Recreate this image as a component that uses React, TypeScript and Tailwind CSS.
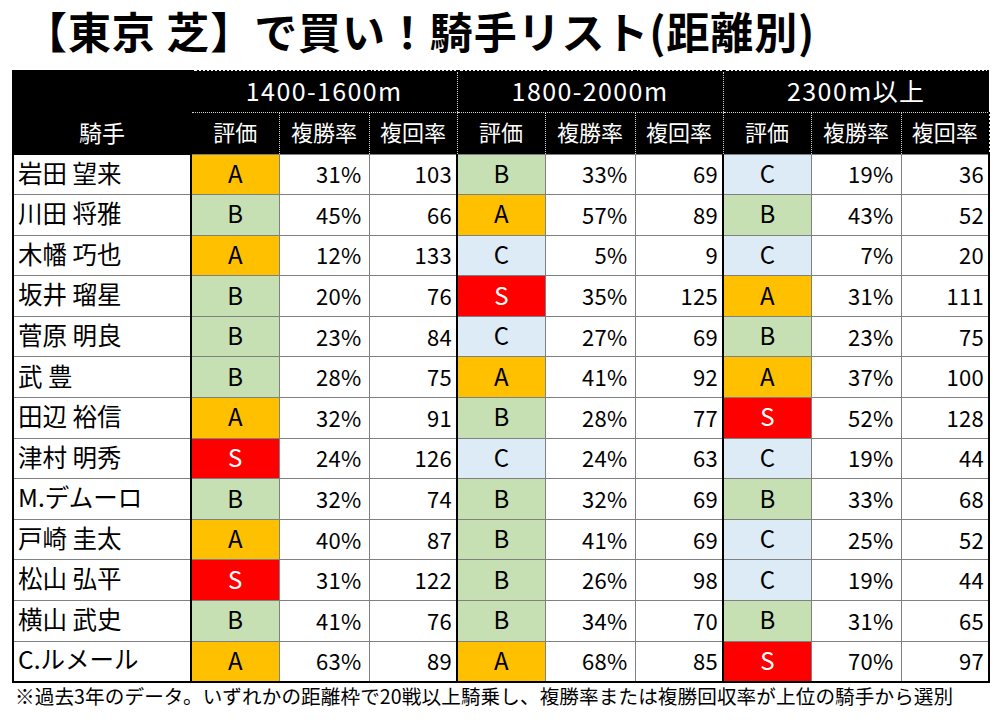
import React from "react";

type Grade = "S" | "A" | "B" | "C";
type Stat = [Grade, string, string];

interface Row {
  name: string;
  stats: [Stat, Stat, Stat];
}

const rows: Row[] = [
  { name: "岩田 望来", stats: [["A", "31%", "103"], ["B", "33%", "69"], ["C", "19%", "36"]] },
  { name: "川田 将雅", stats: [["B", "45%", "66"], ["A", "57%", "89"], ["B", "43%", "52"]] },
  { name: "木幡 巧也", stats: [["A", "12%", "133"], ["C", "5%", "9"], ["C", "7%", "20"]] },
  { name: "坂井 瑠星", stats: [["B", "20%", "76"], ["S", "35%", "125"], ["A", "31%", "111"]] },
  { name: "菅原 明良", stats: [["B", "23%", "84"], ["C", "27%", "69"], ["B", "23%", "75"]] },
  { name: "武 豊", stats: [["B", "28%", "75"], ["A", "41%", "92"], ["A", "37%", "100"]] },
  { name: "田辺 裕信", stats: [["A", "32%", "91"], ["B", "28%", "77"], ["S", "52%", "128"]] },
  { name: "津村 明秀", stats: [["S", "24%", "126"], ["C", "24%", "63"], ["C", "19%", "44"]] },
  { name: "M.デムーロ", stats: [["B", "32%", "74"], ["B", "32%", "69"], ["B", "33%", "68"]] },
  { name: "戸崎 圭太", stats: [["A", "40%", "87"], ["B", "41%", "69"], ["C", "25%", "52"]] },
  { name: "松山 弘平", stats: [["S", "31%", "122"], ["B", "26%", "98"], ["C", "19%", "44"]] },
  { name: "横山 武史", stats: [["B", "41%", "76"], ["B", "34%", "70"], ["B", "31%", "65"]] },
  { name: "C.ルメール", stats: [["A", "63%", "89"], ["A", "68%", "85"], ["S", "70%", "97"]] },
];

const gradeClass: Record<Grade, string> = {
  S: "bg-[#ff0000] text-white",
  A: "bg-[#ffc000] text-black",
  B: "bg-[#c6e0b4] text-black",
  C: "bg-[#ddebf7] text-black",
};

const groups = ["1400-1600m", "1800-2000m", "2300m以上"];

export default function App() {
  return (
    <div className="w-[1002px] h-[720px] bg-white text-black font-['Noto_Sans_CJK_JP',_'Noto_Sans',_sans-serif]">
      <h1 className="h-[70px] pl-[24px] pb-[9px] flex items-center text-[43px] font-bold leading-none tracking-[0.9px]">
        【東京 芝】で買い！騎手リスト(距離別)
      </h1>
      <table className="ml-[12px] w-[977px] table-fixed border-collapse">
        <colgroup>
          <col className="w-[178px]" />
          {groups.map((g) => (
            <React.Fragment key={g}>
              <col className="w-[88px]" />
              <col className="w-[90px]" />
              <col className="w-[88px]" />
            </React.Fragment>
          ))}
        </colgroup>
        <thead className="bg-black text-white">
          <tr className="h-[41px]">
            <th rowSpan={2} className="border-2 border-black align-bottom pb-[9px] font-normal text-[23px] leading-none">
              騎手
            </th>
            {groups.map((g) => (
              <th
                key={g}
                colSpan={3}
                className="border-l border-l-[#d0d0d0] border-dotted border-b border-b-[#d0d0d0] border-t-2 border-t-black font-normal text-[25px] tracking-[1.4px] leading-none pb-[3px]"
              >
                {g}
              </th>
            ))}
          </tr>
          <tr className="h-[42px]">
            {groups.map((g, gi) =>
              ["評価", "複勝率", "複回率"].map((h, hi) => (
                <th
                  key={g + h}
                  className={`border-l border-l-[#d0d0d0] border-dotted font-normal text-[22px] leading-none pb-[5px] ${
                    gi === 2 && hi === 2 ? "border-r-2 border-r-black" : ""
                  }`}
                >
                  {h}
                </th>
              ))
            )}
          </tr>
        </thead>
        <tbody className="text-[22px]">
          {rows.map((r, ri) => {
            const last = ri === rows.length - 1;
            const bottom = last ? "border-b-2 border-b-black" : "border-b border-b-[#808080]";
            return (
              <tr key={r.name} className="h-[40.6px]">
                <td
                  className={`border-l-2 border-l-black border-r-2 border-r-black border-t border-t-[#808080] pl-[4px] pb-[3px] text-[24.5px] leading-none ${bottom}`}
                >
                  {r.name}
                </td>
                {r.stats.map((s, si) => (
                  <React.Fragment key={si}>
                    <td
                      className={`${gradeClass[s[0]]} text-center text-[24px] leading-none pb-[3px] border-l-2 border-l-black border-t border-t-[#808080] ${bottom}`}
                    >
                      {s[0]}
                    </td>
                    <td
                      className={`text-right pr-[7px] pb-[2px] leading-none tracking-[0.3px] border-l border-l-[#808080] border-t border-t-[#808080] ${bottom}`}
                    >
                      {s[1]}
                    </td>
                    <td
                      className={`text-right pr-[4px] pb-[2px] leading-none tracking-[0.3px] border-l border-l-[#808080] border-t border-t-[#808080] ${bottom} ${
                        si === 2 ? "border-r-2 border-r-black" : ""
                      }`}
                    >
                      {s[2]}
                    </td>
                  </React.Fragment>
                ))}
              </tr>
            );
          })}
        </tbody>
      </table>
      <p className="pl-[15px] text-[19.6px] leading-[26px] tracking-[0.1px]">
        ※過去3年のデータ。いずれかの距離枠で20戦以上騎乗し、複勝率または複勝回収率が上位の騎手から選別
      </p>
    </div>
  );
}
